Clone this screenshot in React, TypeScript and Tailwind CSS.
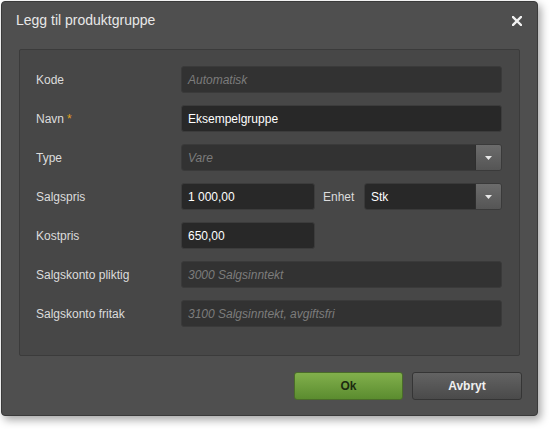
import React from 'react';

function Field({ value, placeholder, className = '' }: { value?: string; placeholder?: string; className?: string }) {
  const empty = !value;
  return (
    <div
      className={`h-[27px] flex items-center px-[6px] rounded-[3px] border ${
        empty ? 'bg-[#323232] border-[#3a3a3a]' : 'bg-[#282828] border-[#3c3c3c]'
      } ${className}`}
    >
      {empty ? (
        <span className="italic text-[#7c7c7c]">{placeholder}</span>
      ) : (
        <span className="text-white">{value}</span>
      )}
    </div>
  );
}

function SelectField({ value, placeholder, className = '' }: { value?: string; placeholder?: string; className?: string }) {
  return (
    <div className={`h-[27px] flex rounded-[3px] border border-[#3a3a3a] overflow-hidden ${className}`}>
      <div className={`flex-1 flex items-center px-[6px] ${value ? 'bg-[#282828]' : 'bg-[#323232]'}`}>
        {value ? (
          <span className="text-white">{value}</span>
        ) : (
          <span className="italic text-[#7c7c7c]">{placeholder}</span>
        )}
      </div>
      <div className="w-[26px] flex items-center justify-center bg-gradient-to-b from-[#6c6c6c] to-[#555555] border-l border-[#2e2e2e]">
        <svg width="7" height="4" viewBox="0 0 7 4">
          <path d="M0 0 L7 0 L3.5 4 Z" fill="#e8e8e8" />
        </svg>
      </div>
    </div>
  );
}

function Row({ label, required, children }: { label: string; required?: boolean; children: React.ReactNode }) {
  return (
    <div className="flex items-center">
      <div className="w-[145px] text-[#dcdcdc]">
        {label}
        {required && <span className="text-[#e0a020] ml-[3px]">*</span>}
      </div>
      <div className="flex-1 flex items-center">{children}</div>
    </div>
  );
}

export default function App() {
  return (
    <div className="w-[550px] h-[429px] bg-white pt-px pl-px" style={{ fontFamily: '"Liberation Sans", Arial, sans-serif' }}>
      <div className="w-[537px] h-[415px] bg-[#4f4f4f] border border-[#3a3a3a] rounded-[4px] shadow-[3px_4px_8px_rgba(0,0,0,0.35)] flex flex-col text-[12px]">
        <div className="h-[37px] flex items-center justify-between pl-[14px] pr-[15px]">
          <span className="text-[14px] text-[#e8e8e8]">Legg til produktgruppe</span>
          <svg width="10" height="10" viewBox="0 0 10 10">
            <path d="M1 1 L9 9 M9 1 L1 9" stroke="#f2f2f2" strokeWidth="2.4" strokeLinecap="square" />
          </svg>
        </div>
        <div className="mx-[17px] mt-[10px] h-[307px] bg-[#474747] border border-[#3b3b3b] rounded-[2px] pt-[16px] pl-[16px] pr-[17px] flex flex-col gap-[12px]">
          <Row label="Kode">
            <Field placeholder="Automatisk" className="flex-1" />
          </Row>
          <Row label="Navn" required>
            <Field value="Eksempelgruppe" className="flex-1" />
          </Row>
          <Row label="Type">
            <SelectField placeholder="Vare" className="flex-1" />
          </Row>
          <Row label="Salgspris">
            <Field value="1 000,00" className="w-[134px]" />
            <span className="text-[#dcdcdc] ml-[8px] w-[41px]">Enhet</span>
            <SelectField value="Stk" className="flex-1" />
          </Row>
          <Row label="Kostpris">
            <Field value="650,00" className="w-[134px]" />
          </Row>
          <Row label="Salgskonto pliktig">
            <Field placeholder="3000 Salgsinntekt" className="flex-1" />
          </Row>
          <Row label="Salgskonto fritak">
            <Field placeholder="3100 Salgsinntekt, avgiftsfri" className="flex-1" />
          </Row>
        </div>
        <div className="flex justify-end gap-[9px] mt-[16px] pr-[15px]">
          <button className="w-[109px] h-[28px] rounded-[3px] border border-[#4a6b2a] bg-gradient-to-b from-[#82b04c] to-[#5b8c2f] text-[#1c2a10] font-bold text-[12px]">
            Ok
          </button>
          <button className="w-[110px] h-[28px] rounded-[3px] border border-[#353535] bg-gradient-to-b from-[#636363] to-[#4a4a4a] text-[#f0f0f0] font-bold text-[12px]">
            Avbryt
          </button>
        </div>
      </div>
    </div>
  );
}
